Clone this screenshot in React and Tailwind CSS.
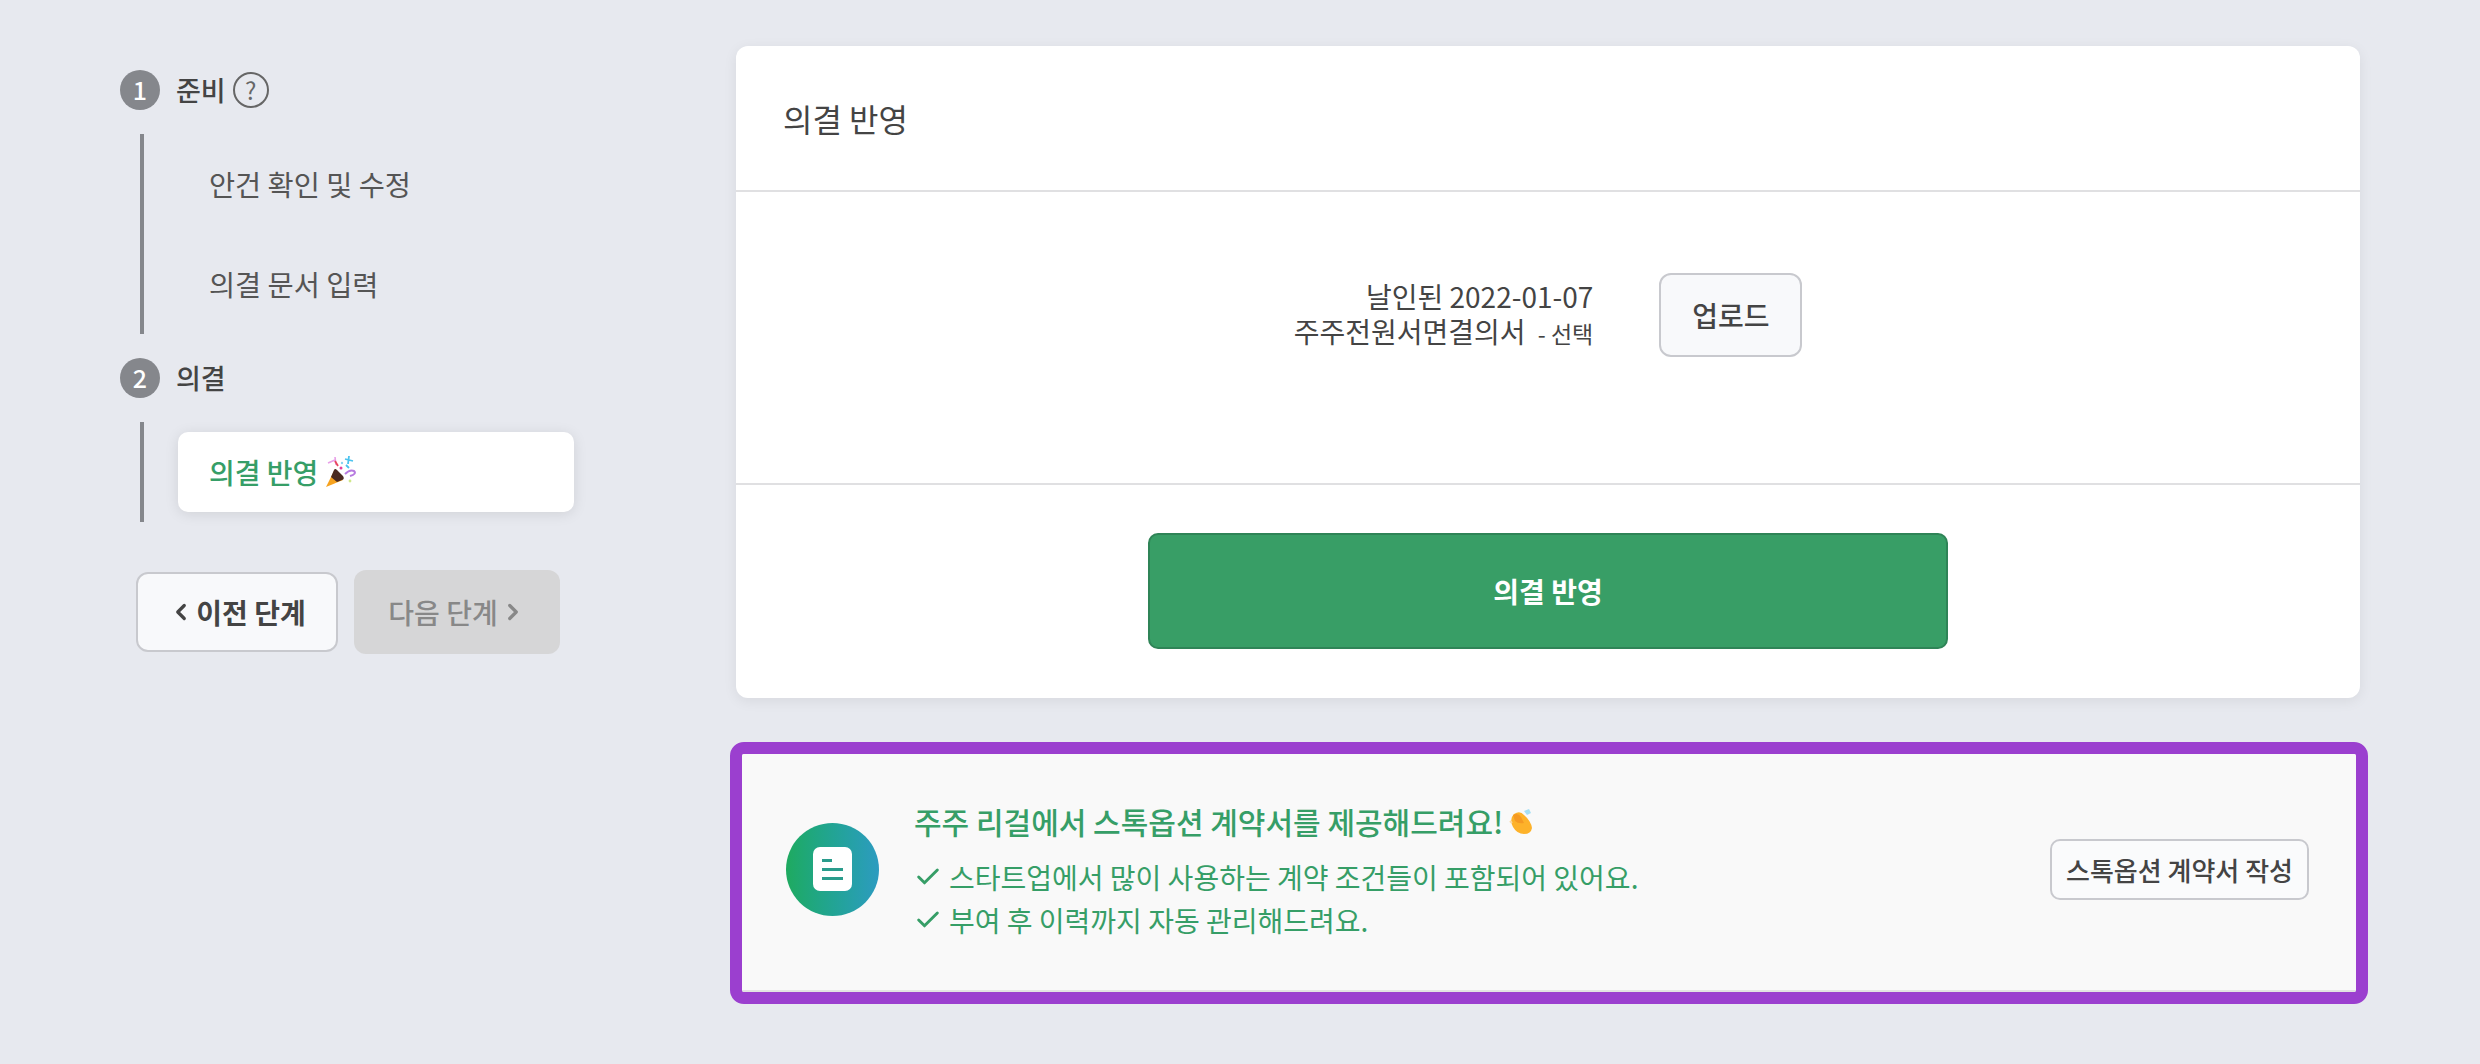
import { Check, ChevronLeft, ChevronRight } from 'lucide-react'

const kr = '[font-family:"Noto_Sans_CJK_KR","Noto_Sans",sans-serif]'

function Step({ n, children }) {
  return (
    <div className="flex items-center gap-4 h-10 text-[27px] font-medium text-[#444]">
      <span className="w-10 h-10 rounded-full bg-[#85878c] text-white flex items-center justify-center text-[25px] font-medium">{n}</span>
      {children}
    </div>
  )
}

function Popper() {
  return (
    <svg width="31" height="32" viewBox="0 0 31 32" className="ml-2">
      <path d="M0 31 L8 15 L17 24 Z" fill="#f6a21e" />
      <path d="M5 21 L8 14 Q9 12 11 14 L17 20 Q19 23 16 24 L11 26 Z" fill="#4a2a20" />
      <path d="M2 7 L9 4 M9 1 L10 9" stroke="#e8a0e8" strokeWidth="1.6" fill="none" />
      <path d="M9 5 l3 5" stroke="#e8475f" strokeWidth="1.8" fill="none" />
      <circle cx="15" cy="12" r="1.5" fill="#e83fa0" />
      <path d="M19 3 l8 2 M23 0 l-1 8 M20 9 l3 3" stroke="#4cc3ee" strokeWidth="1.8" fill="none" />
      <path d="M19 18 q5-5 9-3 q3 3-4 5" stroke="#b77be0" strokeWidth="2" fill="none" />
      <circle cx="16" cy="7" r="1.2" fill="#8ad6f0" />
      <circle cx="24" cy="25" r="1.4" fill="#cfe88a" />
    </svg>
  )
}

function Clap() {
  return (
    <svg width="24" height="26" viewBox="0 0 24 26" className="ml-[6px]">
      <path d="M5 5 Q11 1 15 6 Q22 12 23 19 Q22 25 15 25 Q8 25 4 18 Q0 10 5 5 Z" fill="#fdb22a" />
      <path d="M4 6 Q9 3 12 8 L15 14 Q9 15 6 12 Z" fill="#f59a23" />
      <path d="M1 12 l2 2" stroke="#fad7a0" strokeWidth="2" fill="none" />
      <path d="M15 2 L20 0 L22 4 L18 6 Z" fill="#a5dff5" />
    </svg>
  )
}

export default function App() {
  return (
    <div className={`${kr} w-full h-[1064px] bg-[#e7e9ef] flex overflow-hidden`}>
      {/* sidebar */}
      <div className="w-[736px] shrink-0 pl-[120px] pt-[70px]">
        <Step n="1">
          <span className="flex items-center gap-[7px]">준비
            <span className="w-9 h-9 rounded-full border-2 border-[#666] text-[#666] flex items-center justify-center text-[24px] font-normal">?</span>
          </span>
        </Step>
        <div className="mt-6 ml-5 h-[200px] border-l-4 border-[#85878c] pl-[65px] flex flex-col justify-around text-[#555] text-[28.4px]">
          <div>안건 확인 및 수정</div>
          <div>의결 문서 입력</div>
        </div>
        <div className="mt-6">
          <Step n="2">의결</Step>
        </div>
        <div className="mt-6 ml-5 h-[100px] border-l-4 border-[#85878c] pl-[34px] flex items-center">
          <div className="w-[396px] h-20 bg-white rounded-[10px] shadow-[0_2px_14px_rgba(0,0,0,0.10)] pl-[31px] flex items-center text-[28px] font-medium text-[#369e67]">
            의결 반영 <Popper />
          </div>
        </div>
        <div className="mt-[48px] ml-4 flex items-center gap-4">
          <button className="w-[202px] h-20 rounded-[12px] border-2 border-[#c8c9ce] bg-[#f8f9fb] text-[28px] font-bold text-[#444] flex items-center justify-center">
            <ChevronLeft size={26} strokeWidth={3} className="mr-[2px]" />이전 단계
          </button>
          <button className="w-[206px] h-[84px] rounded-[12px] bg-[#d6d6d7] text-[28px] font-medium text-[#888] flex items-center justify-center">
            다음 단계<ChevronRight size={26} strokeWidth={3} className="ml-[2px]" />
          </button>
        </div>
      </div>

      {/* main */}
      <div className="w-[1624px] pt-[46px]">
        <div className="bg-white rounded-[12px] shadow-[0_3px_14px_rgba(0,0,0,0.07)] h-[652px] flex flex-col">
          <div className="h-[146px] pl-[47px] flex items-center border-b-2 border-[#e0e0e2] text-[32px] text-[#444]">의결 반영</div>
          <div className="h-[293px] flex items-center justify-center border-b-2 border-[#e0e0e2] pb-[46px]">
            <div className="text-right text-[28px] leading-[35px] text-[#444] mr-[66px]">
              <div>날인된 2022-01-07</div>
              <div>주주전원서면결의서 <span className="text-[23px] ml-[6px]">- 선택</span></div>
            </div>
            <button className="w-[143px] h-[84px] rounded-[12px] border-2 border-[#c8c9ce] bg-[#f8f9fb] text-[28px] font-medium text-[#444]">업로드</button>
          </div>
          <div className="flex-1 flex justify-center pt-[48px]">
            <button className="w-[800px] h-[116px] rounded-[10px] bg-[#389e66] border-2 border-[#2f8457] text-white text-[28px] font-bold">의결 반영</button>
          </div>
        </div>

        <div className="mt-[44px] -ml-[6px] w-[1638px] h-[262px] border-[12px] border-[#9b3fcf] rounded-[14px]">
          <div className="h-full bg-[#f9f9f9] border-b-2 border-[#e2e2e2] rounded-[2px] flex items-center pl-[44px] pr-[47px] pb-[6px]">
            <div className="w-[93px] h-[93px] rounded-full bg-gradient-to-r from-[#1faa5f] to-[#2d9bc0] flex items-center justify-center shrink-0">
              <div className="w-[39px] h-[44px] bg-white rounded-[7px] flex flex-col justify-center items-center gap-[6px]">
                <span className="w-[10px] h-[3px] bg-[#2a9c8c] mr-[11px]"></span>
                <span className="w-[21px] h-[3px] bg-[#2a9c8c]"></span>
                <span className="w-[21px] h-[3px] bg-[#2a9c8c]"></span>
              </div>
            </div>
            <div className="ml-[35px] mt-[5px] flex-1 text-[#369e67]">
              <div className="flex items-center text-[30px] font-medium h-10 whitespace-nowrap">주주 리걸에서 스톡옵션 계약서를 제공해드려요! <Clap /></div>
              <div className="mt-[14px] flex items-center text-[28px] h-[43px]"><Check size={28} strokeWidth={2.5} className="mr-[7px]" />스타트업에서 많이 사용하는 계약 조건들이 포함되어 있어요.</div>
              <div className="flex items-center text-[28px] h-[43px]"><Check size={28} strokeWidth={2.5} className="mr-[7px]" />부여 후 이력까지 자동 관리해드려요.</div>
            </div>
            <button className="w-[259px] h-[61px] rounded-[10px] border-2 border-[#c8c9ce] bg-[#fafbfc] text-[26px] font-medium text-[#444] whitespace-nowrap">스톡옵션 계약서 작성</button>
          </div>
        </div>
      </div>
    </div>
  )
}
